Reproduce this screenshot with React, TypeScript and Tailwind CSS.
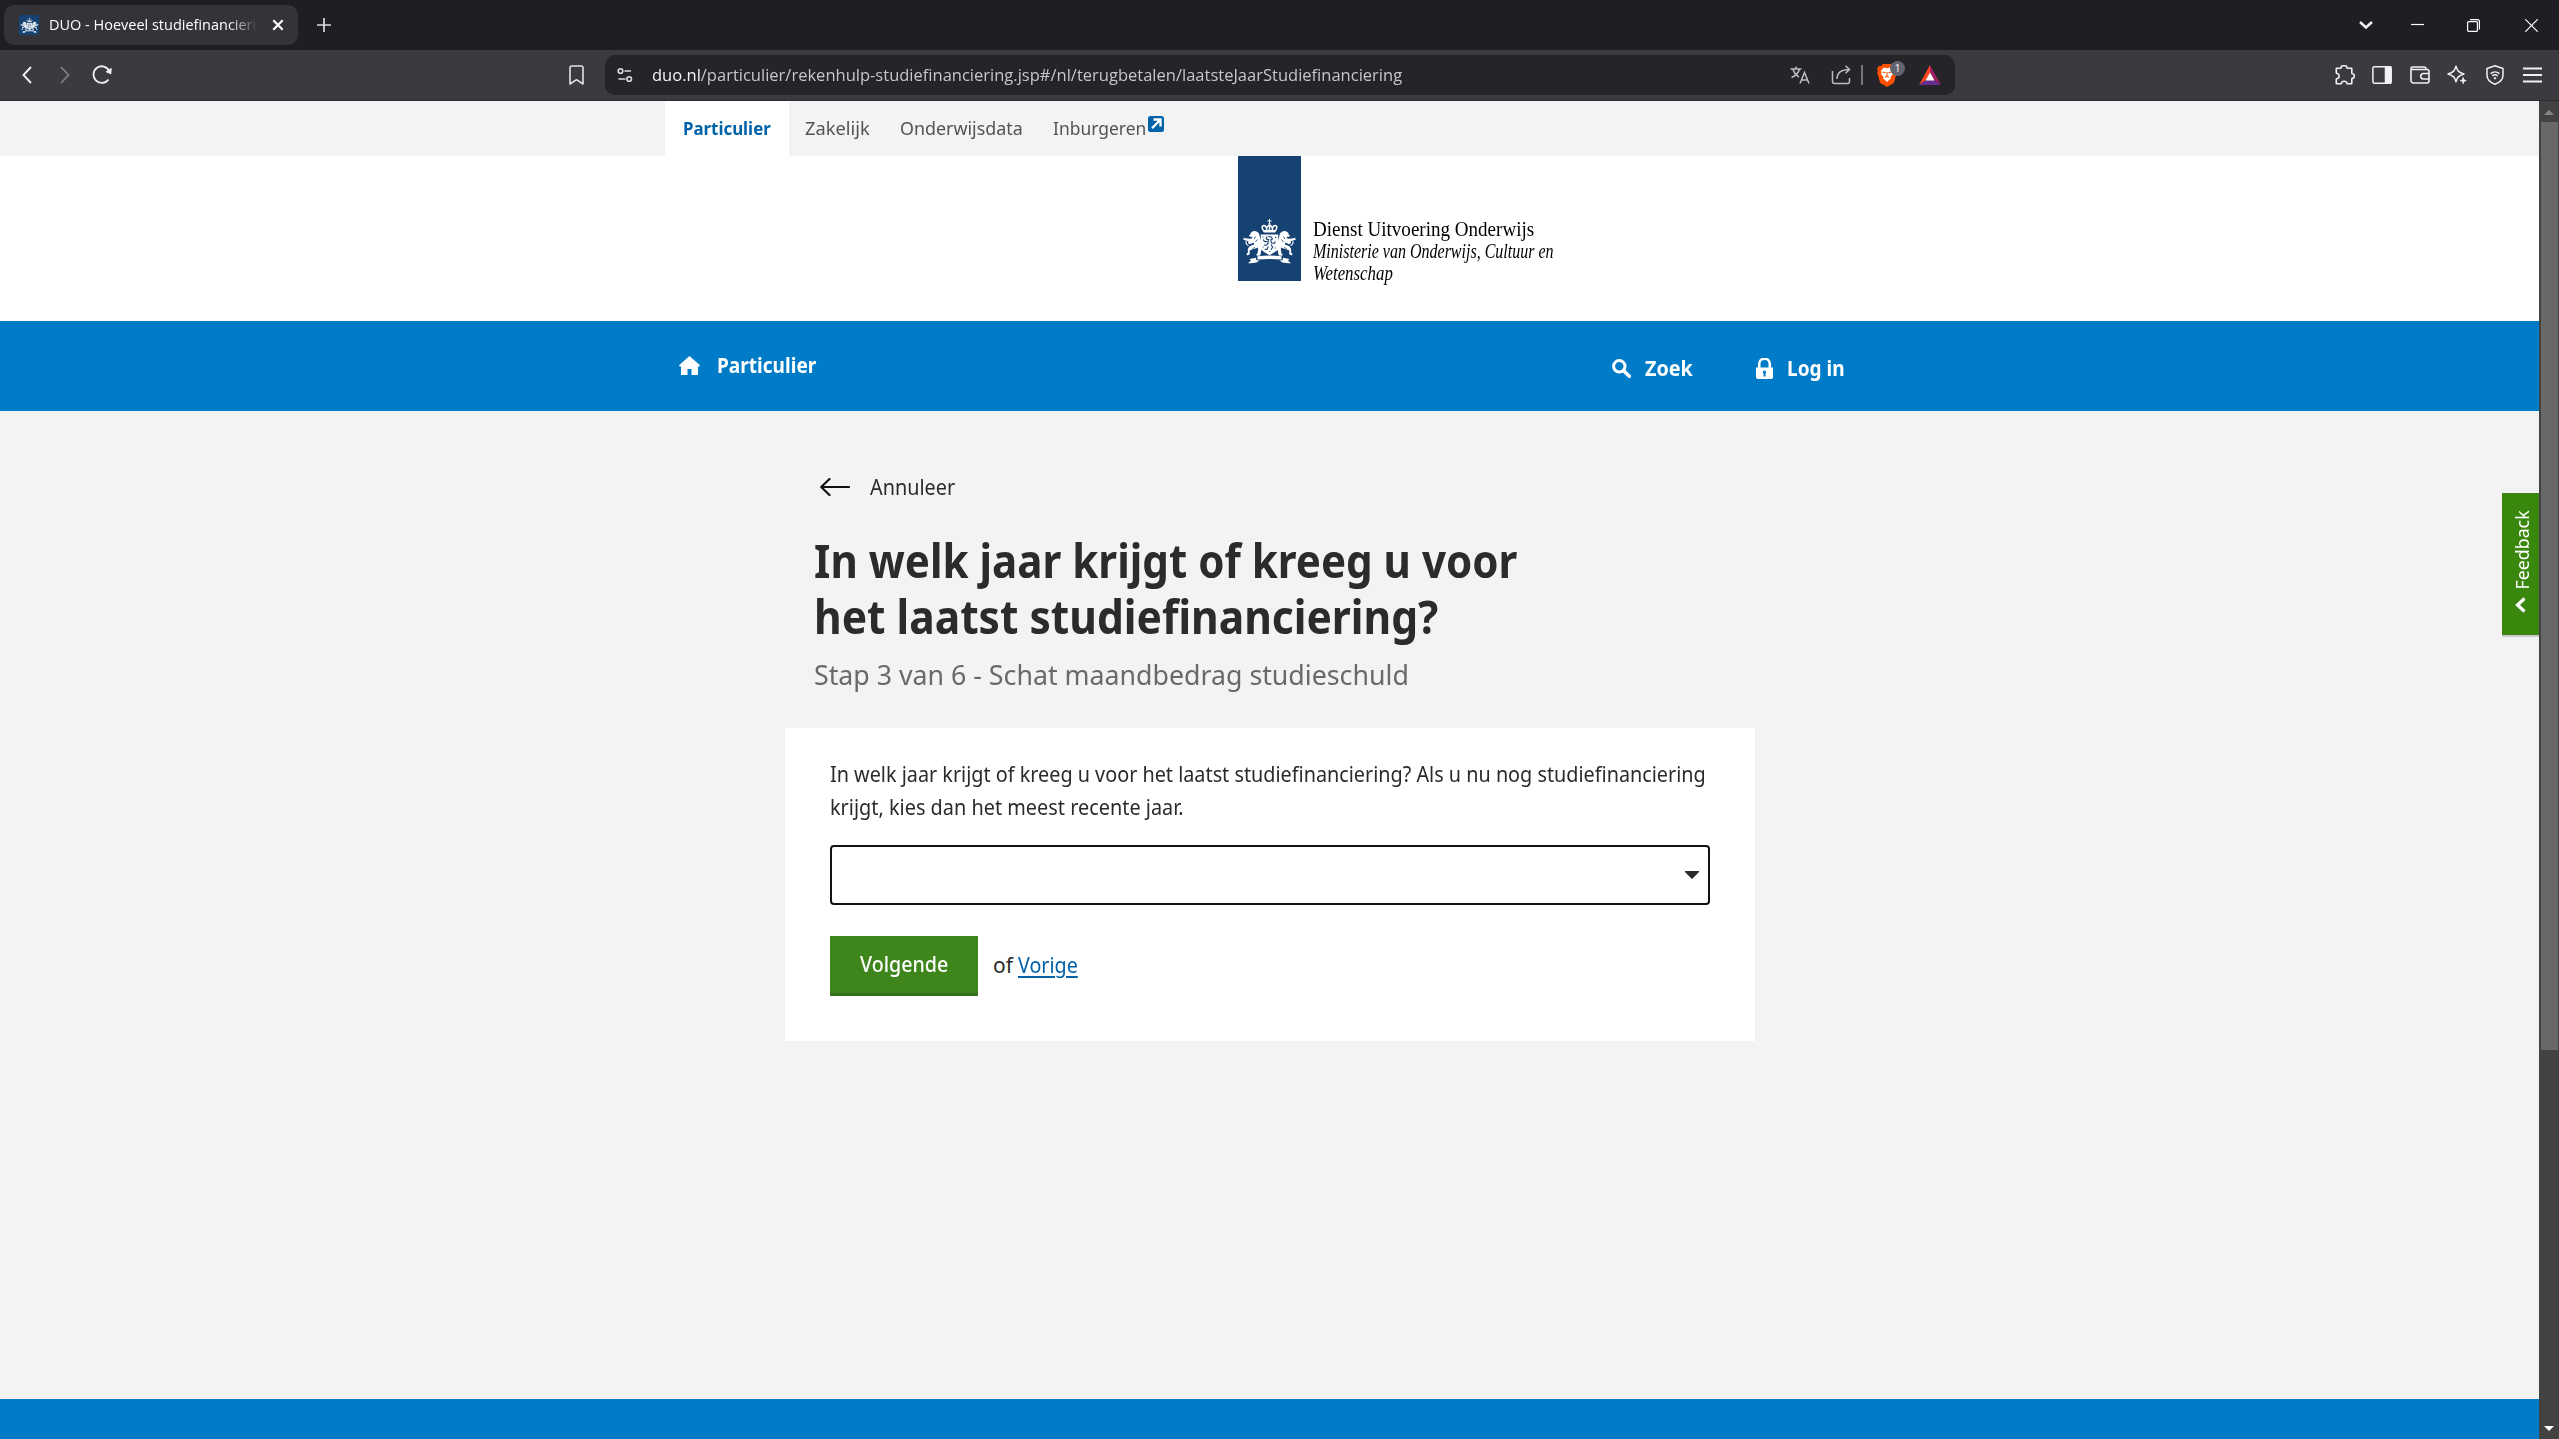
import { useLayoutEffect, useRef, useState, type ReactNode } from "react";

/* Single line of text whose glyphs are condensed to the given width. */
function Fit({ w, className = "", children }: { w: number; className?: string; children: ReactNode }) {
  const ref = useRef<HTMLSpanElement>(null);
  const [scale, setScale] = useState(1);
  useLayoutEffect(() => {
    const measure = () => {
      if (ref.current) setScale(w / ref.current.offsetWidth);
    };
    measure();
    document.fonts?.ready.then(measure);
  }, [w]);
  return (
    <span className={`block shrink-0 whitespace-nowrap ${className}`} style={{ width: w }}>
      <span ref={ref} className="inline-block origin-left" style={{ transform: `scaleX(${scale})` }}>
        {children}
      </span>
    </span>
  );
}

function Lion() {
  return (
    <g>
      <path d="M17 14.500c-1.600-2.600-5-3.400-7.400-1.600-1 .8-1.400 1.800-1.200 2.900l-1.600.6 1.200 1.300 2.600.3c-.4 1.100-1.300 1.700-2.400 1.800l-4.600-.6-2.300-.7.9 1.500-1.600.5 2.500.7 3.300 1.100-.4 1.600c.6 1 1.900 1.300 3 .8l2.800-1.300.2 2.200c-1.400.5-3.700 1-5.100 2.600-1.200 1.300-1.300 3.200-.9 5.200l-1.500 1.400.6 1.800 2.700-1.400-.2-3.600c2.300-1.800 5.600-1.600 8-3.200 1.400 1.900-.2 4.100-.1 6.200l-1.500 1.500 1.500.7 2.800-.4.9-4.600c1.800-2.400 1.800-5.500.2-8.100z" />
      <path d="M6.500 26.500c-2-.8-3.200-2.600-2.200-4.400" fill="none" stroke="currentColor" strokeWidth="1.100" />
      <path d="M13.500 17.500l-1.300 2.600M15.500 20.500l-2 2.400M10.500 29.500l2.500-1" fill="none" stroke="#154273" strokeWidth=".8" />
    </g>
  );
}

function CoatOfArms({ className }: { className: string }) {
  return (
    <svg viewBox="0 0 55 46" className={className} fill="currentColor">
      {/* crown */}
      <path d="M27 0h1v1.600h1.600v1H28v1.600h-1V2.600h-1.600v-1H27z" />
      <circle cx="27.5" cy="5" r="1.100" />
      <path
        d="M21.800 12.500l-1-2.400c-1.300-1.800-.6-3.500 1-3.600 1.500 0 2.400 1.300 2.600 2.600M33.200 12.500l1-2.400c1.300-1.800.6-3.500-1-3.600-1.500 0-2.400 1.300-2.600 2.600M24.800 11.500c-.9-2.600.8-5 2.700-5s3.600 2.400 2.700 5M27.500 6.500v5"
        fill="none"
        stroke="currentColor"
        strokeWidth="1.500"
      />
      <path d="M21.300 11h12.400l-.5 2.600H21.800z" />
      {/* shield */}
      <path d="M18.500 15.500h18v12.500c0 4-4.600 5.400-9 8.200-4.400-2.800-9-4.200-9-8.200z" />
      <path d="M25.500 17.500c-1 .6-1.400 1.600-1 2.600l2.200.5-.8 2.400-3.400-.6-1.400-1.900M26.500 17.500l2.600.4 1.400 2-1.700 1.200.8 3 2.400.3 1.500-1.700M27 23.500l-2.500 2.700-2.600-.2M29 25.500l1.600 2.500-1.400 2.700M26.300 27.500l-1.500 3.200-2-.6" stroke="#154273" strokeWidth="1.100" fill="none" />
      <path d="M20.500 18h1M33 18.500h1.200M20.600 28h1M32.600 29h1M27.300 32.500h1" stroke="#154273" strokeWidth="1.100" />
      <path d="M18 15v13c0 3 2 4.500 4 5.700M37 15v13c0 3-2 4.500-4 5.700" stroke="#154273" strokeWidth=".8" fill="none" />
      <Lion />
      <g transform="translate(55 0) scale(-1 1)">
        <Lion />
      </g>
      {/* ribbon */}
      <path d="M15.500 37.200c8-.9 16-.9 24 0v3.400c-8-.9-16-.9-24 0zM14 38.800l-6.500 1.200 1.500 1.600-3 2.600c2.500.2 5.500 0 8.500-.6l3-2.200-3.200-.2zM41 38.800l6.500 1.200-1.500 1.600 3 2.600c-2.500.2-5.500 0-8.500-.6l-3-2.200 3.200-.2z" />
    </svg>
  );
}

function TabStrip() {
  return (
    <div className="flex h-[50px] shrink-0 items-center bg-[#1f1e23] pl-1 text-white">
      <div className="flex h-10 w-[294px] items-center rounded-[10px] bg-[#343338] pr-[13px] pl-[15px]">
        <div className="flex h-5 w-5 items-center justify-center bg-[#154273]">
          <CoatOfArms className="h-[17px] w-[19px] text-[#e8edf3]" />
        </div>
        <div className="mb-[2px] ml-[10px] w-[209px] overflow-hidden [mask-image:linear-gradient(to_right,#000_86%,transparent)]">
          <Fit w={224} className="font-['Open_Sans',sans-serif] text-[15px] leading-6">
            DUO - Hoeveel studiefinanciering
          </Fit>
        </div>
        <svg viewBox="0 0 12 12" className="ml-[14px] h-3 w-3" fill="none" stroke="white" strokeWidth="2.200">
          <path d="M1.300 1.300l9.400 9.400M10.700 1.300l-9.400 9.400" />
        </svg>
      </div>
      <svg viewBox="0 0 14 14" className="ml-[19px] h-[14px] w-[14px]" stroke="#dcdbe0" strokeWidth="1.700">
        <path d="M7 0v14M0 7h14" />
      </svg>
      <div className="ml-auto flex items-center pr-[21px]">
        <svg viewBox="0 0 14 8" className="mr-[38px] h-2 w-[14px]" fill="none" stroke="#f1f1f3" strokeWidth="2.500">
          <path d="M1 1l6 5.500L13 1" />
        </svg>
        <svg viewBox="0 0 13 13" className="mr-[43px] h-[13px] w-[13px]" stroke="white" strokeWidth="1.200">
          <path d="M0 5.500h13" />
        </svg>
        <svg viewBox="0 0 13 13" className="mr-[45px] h-[13px] w-[13px]" fill="none" stroke="white" strokeWidth="1.200">
          <rect x=".6" y="2.600" width="9.800" height="9.800" rx="1" />
          <path d="M3 .6h7.400c1.200 0 2 .8 2 2V10.500" />
        </svg>
        <svg viewBox="0 0 13 13" className="h-[13px] w-[13px]" stroke="white" strokeWidth="1.200">
          <path d="M.3.3l12.400 12.400M12.700.3L.3 12.700" />
        </svg>
      </div>
    </div>
  );
}

function Slot({ children }: { children: ReactNode }) {
  return <span className="flex w-[37.5px] justify-center">{children}</span>;
}

function AddressBar() {
  return (
    <div className="flex h-10 w-[1350px] items-center rounded-[10px] bg-[#252429] pl-3 font-['Open_Sans',sans-serif]">
      <svg viewBox="0 0 16 16" className="h-4 w-4" fill="none" stroke="#dddce0" strokeWidth="1.600">
        <circle cx="3.500" cy="4" r="2.300" />
        <path d="M7.500 4H14M1.500 12h7" />
        <circle cx="12.200" cy="12" r="2.300" />
      </svg>
      <Fit w={750} className="ml-[19px] text-[17px] leading-6 text-[#c6c5ca]">
        <span className="text-[#f4f4f6]">duo.nl</span>
        /particulier/rekenhulp-studiefinanciering.jsp#/nl/terugbetalen/laatsteJaarStudiefinanciering
      </Fit>
      <div className="ml-auto flex items-center pr-[14px]">
        <svg viewBox="0 0 20 20" className="h-5 w-5" fill="none" stroke="#bdbcc1" strokeWidth="1.500">
          <path d="M.5 4h11M6 1.500V4M3 4c1 4 3.500 6.500 6 8M9.500 4C8.500 8 5 11 1.500 12.500" />
          <path d="M10 18.500l4.500-11 4.500 11M11.500 15h6" />
        </svg>
        <svg viewBox="0 0 22 20" className="ml-[21px] h-5 w-[22px]" fill="none" stroke="#bdbcc1" strokeWidth="1.500">
          <path d="M1.500 6v10.500a2 2 0 002 2h13a2 2 0 002-2V13" />
          <path d="M6 14c0-6 3.500-9.500 12.500-9.500M14.500.8l4 3.700-4 3.800" />
        </svg>
        <span className="ml-[8px] h-5 w-[2px] bg-[#76757a]" />
        <div className="relative mr-px ml-[14px]">
          <svg viewBox="0 0 20 23" className="h-[23px] w-5">
            <path d="M6 0h8l2 2 1.800-.3L20 4.500l-.8 2 .6 2-3 10.500-6.800 4-6.800-4L.2 8.500l.6-2-.8-2 2.200-2.800L4 2z" fill="#ff5000" />
            <path d="M10 4.200l3.200-.7 3 3.500-.8 1.700.7 1.300-2.600 3 .3 1.700-1.800 1.300L10 18l-2-2-1.800-1.300.3-1.700-2.600-3 .7-1.300L3.800 7l3-3.500z" fill="white" />
            <path d="M5.500 8l3 .7M14.500 8l-3 .7M10 8v4M8 13.200l2-.9 2 .9" stroke="#ff5000" strokeWidth="1.100" fill="none" />
          </svg>
          <span className="absolute -top-[3px] left-[13px] flex h-[15px] w-[15px] items-center justify-center rounded-full bg-[#63636f] text-[10px] leading-none text-white">
            1
          </span>
        </div>
        <svg viewBox="0 0 22 20" className="ml-[21px] h-5 w-[22px]">
          <path d="M11 0v8l-4 7-7 5z" fill="#ff4724" />
          <path d="M11 0v8l4 7 7 5z" fill="#9e1f63" />
          <path d="M0 20l7-5h8l7 5z" fill="#662d91" />
          <path d="M11 7.500l4.500 8h-9z" fill="white" />
        </svg>
      </div>
    </div>
  );
}

function Toolbar() {
  return (
    <div className="flex h-[51px] shrink-0 items-center border-b border-[#2b2a2f] bg-[#3b3a3f]">
      <div className="flex w-[605px] items-center pl-[22px]">
        <svg viewBox="0 0 10 18" className="h-[18px] w-[10px]" fill="none" stroke="#f1f1f3" strokeWidth="1.900">
          <path d="M9 1L1.500 9 9 17" />
        </svg>
        <svg viewBox="0 0 10 18" className="ml-[28px] h-[18px] w-[10px]" fill="none" stroke="#838287" strokeWidth="1.700">
          <path d="M1 1l7.500 8L1 17" />
        </svg>
        <svg viewBox="0 0 20 20" className="ml-[22px] h-5 w-5" fill="none" stroke="#f1f1f3" strokeWidth="1.800">
          <path d="M16.500 14.500A8.300 8.300 0 1117.300 6" />
          <path d="M19.200 3.500l-.4 5.300-4.600-2z" fill="#f1f1f3" strokeWidth="1" strokeLinejoin="round" />
        </svg>
        <svg viewBox="0 0 15 20" className="ml-[457px] h-5 w-[15px]" fill="none" stroke="#e3e2e6" strokeWidth="1.600" strokeLinejoin="round">
          <path d="M1 19V2.800A1.800 1.800 0 012.800 1h9.400A1.800 1.800 0 0114 2.800V19l-6.500-4.300z" />
        </svg>
      </div>
      <AddressBar />
      <div className="ml-auto flex items-center pr-[8px]">
        <Slot>
          <svg viewBox="0 0 20 20" className="h-5 w-5" fill="none" stroke="#f1f1f3" strokeWidth="1.600" strokeLinejoin="round">
            <path d="M1.300 3.200h4.400c.4 0 .6-.4.500-.8C6 .9 7.500.8 9 .8s3 .2 2.800 1.600c-.1.400.1.800.5.800h4.500v5c0 .4.300.6.700.6 1.200 0 1.700 1 1.700 2.200s-.5 2.400-1.700 2.400c-.4 0-.7.200-.7.600v4.800h-4.400c-.4 0-.6-.4-.6-.8 0-1.300-1.200-1.800-2.600-1.800s-2.600.5-2.600 1.800c0 .4-.2.800-.6.800H1.300v-4.600c0-.5.400-.7.900-.7 1.200-.1 1.900-1 1.900-2.200S3.400 8.700 2.200 8.500c-.5 0-.9-.2-.9-.7z" />
          </svg>
        </Slot>
        <Slot>
          <svg viewBox="0 0 20 18" className="h-[18px] w-5" fill="none" stroke="#f1f1f3" strokeWidth="1.500">
            <rect x=".9" y=".8" width="18.200" height="16.400" rx="1.500" />
            <path d="M13.500.8h4.500a1 1 0 011 1v14.400a1 1 0 01-1 1h-4.500z" fill="#f1f1f3" />
          </svg>
        </Slot>
        <Slot>
          <svg viewBox="0 0 20 18" className="h-[18px] w-5" fill="none" stroke="#f1f1f3" strokeWidth="1.600" strokeLinejoin="round">
            <path d="M1 3v11.500a2.500 2.500 0 002.500 2.500H17a2 2 0 002-2V5.500a2 2 0 00-2-2H2.500C1.500 3.500 1 3 1 2.200S1.600 1 2.500 1H14c1.200 0 2 .8 2 2v.5" />
            <path d="M19 7.500h-5.500a2.700 2.700 0 000 5.500H19" />
          </svg>
        </Slot>
        <Slot>
          <svg viewBox="0 0 20 20" className="h-5 w-5" fill="none" stroke="#f1f1f3" strokeWidth="1.500" strokeLinejoin="round">
            <path d="M9 1.200c1 4.300 2.600 6.200 8 7.800-5.400 1.600-7 3.500-8 7.800-1-4.300-2.600-6.200-8-7.800 5.400-1.600 7-3.500 8-7.800z" />
            <path d="M16.200 12.500c.3 2.200.8 2.700 3 3.100-2.200.4-2.700.9-3 3.100-.3-2.200-.8-2.700-3-3.100 2.200-.4 2.700-.9 3-3.100z" fill="#f1f1f3" strokeWidth="1" />
          </svg>
        </Slot>
        <Slot>
          <svg viewBox="0 0 18 20" className="h-5 w-[18px]" fill="none" stroke="#f1f1f3" strokeWidth="1.500" strokeLinejoin="round">
            <path d="M9 .8l8 2.700v6.700c0 4.500-3.500 7.300-8 9-4.500-1.700-8-4.500-8-9V3.500z" />
            <path d="M4.600 8.600c2.600-2.300 6.200-2.300 8.800 0M6.300 11c1.600-1.400 3.800-1.400 5.400 0" />
            <circle cx="9" cy="13.200" r=".9" fill="#f1f1f3" strokeWidth=".6" />
          </svg>
        </Slot>
        <Slot>
          <svg viewBox="0 0 19 16" className="h-4 w-[19px]" stroke="#f1f1f3" strokeWidth="1.800">
            <path d="M0 1.500h19M0 8h19M0 14.500h19" />
          </svg>
        </Slot>
      </div>
    </div>
  );
}

function SiteNav() {
  return (
    <nav className="flex h-[55px] shrink-0 items-center bg-[#f3f3f3] pl-[665px] font-['Noto_Sans',sans-serif] text-[18px] leading-6 text-[#535353]">
      <div className="flex h-full w-[124px] items-center bg-white pb-[2px] pl-[18px] font-bold text-[#0062a8]">
        <Fit w={88}>Particulier</Fit>
      </div>
      <Fit w={65} className="mb-[2px] ml-[16px]">Zakelijk</Fit>
      <Fit w={123} className="mb-[2px] ml-[30px]">Onderwijsdata</Fit>
      <Fit w={93} className="mb-[2px] ml-[30px]">Inburgeren</Fit>
      <svg viewBox="0 0 16 16" className="mb-[9px] ml-[2px] h-4 w-4">
        <rect width="16" height="16" rx="2.500" fill="#0062a8" />
        <path d="M5.500 3.500h7v7M12 4L4 12.300" stroke="white" strokeWidth="2.300" fill="none" />
      </svg>
    </nav>
  );
}

function Masthead() {
  return (
    <header className="flex h-[165px] shrink-0 bg-white pl-[1238px]">
      <div className="flex h-[125px] w-[63px] justify-center bg-[#154273] pt-[63px]">
        <CoatOfArms className="h-[46px] w-[55px] text-white" />
      </div>
      <div className="ml-3 pt-[62px] font-['Liberation_Serif',serif] text-[20px] leading-[22px] text-black">
        <Fit w={221}>Dienst Uitvoering Onderwijs</Fit>
        <Fit w={241} className="italic">Ministerie van Onderwijs, Cultuur en</Fit>
        <Fit w={80} className="italic">Wetenschap</Fit>
      </div>
    </header>
  );
}

function MainBar() {
  return (
    <div className="flex h-[90px] shrink-0 bg-[#007bc7] pl-[679px] font-['Noto_Sans',sans-serif] text-[21px] leading-6 font-bold text-white">
      <div className="flex h-[88px] items-center">
        <svg viewBox="0 0 21 19" className="h-[19px] w-[21px]" fill="white">
          <path d="M10.500 0L21 9.200l-.8 1.200H19V19h-6.500v-6h-4v6H2v-8.600H.8L0 9.200z" />
        </svg>
        <Fit w={99} className="ml-[17px]">Particulier</Fit>
      </div>
      <div className="ml-[796px] flex h-[94px] items-center">
        <svg viewBox="0 0 19 19" className="h-[19px] w-[19px]" fill="none" stroke="white">
          <circle cx="7.300" cy="7.300" r="5.700" strokeWidth="3" />
          <path d="M11.500 11.500l5.800 5.800" strokeWidth="3.600" strokeLinecap="round" />
        </svg>
        <Fit w={48} className="ml-[14px]">Zoek</Fit>
        <svg viewBox="0 0 17 21" className="ml-[63px] h-[21px] w-[17px]">
          <path d="M3.200 10V6a5.300 5.300 0 0110.600 0v4" fill="none" stroke="white" strokeWidth="2.600" />
          <path d="M0 9.500h17V19c0 1.300-.7 2-2 2H2c-1.300 0-2-.7-2-2z" fill="white" />
          <path d="M8.500 12.500a1.700 1.700 0 011 3V18.500h-2v-3a1.700 1.700 0 011-3z" fill="#007bc7" />
        </svg>
        <Fit w={58} className="ml-[14px]">Log in</Fit>
      </div>
    </div>
  );
}

function QuestionCard() {
  return (
    <section className="mt-[37px] h-[313px] w-[970px] bg-white px-[45px] pt-[30px] text-[21px] leading-[33px] text-[#2b2b2b]">
      <Fit w={876}>
        In welk jaar krijgt of kreeg u voor het laatst studiefinanciering? Als u nu nog studiefinanciering
      </Fit>
      <Fit w={354}>krijgt, kies dan het meest recente jaar.</Fit>
      <div className="mt-[21px] flex h-[60px] w-[880px] items-center justify-end rounded-[4px] border-2 border-[#111111] bg-white pr-[9px]">
        <svg viewBox="0 0 14 8" className="mb-[1px] h-2 w-[14px]" fill="#2b2b2b">
          <path d="M0 0h14v1L7.600 7.600a.8.8 0 01-1.200 0L0 1z" />
        </svg>
      </div>
      <div className="mt-[31px] flex items-center">
        <button className="flex h-[60px] w-[148px] items-center justify-center border-b-[3px] border-[#33701a] bg-[#3e861c] text-white">
          <Fit w={88} className="text-left font-medium">Volgende</Fit>
        </button>
        <div className="mb-[2px] ml-[15px] flex">
          <Fit w={20}>of</Fit>
          <Fit w={60} className="ml-[5px] text-[#0062a8]">
            <span className="underline decoration-2 underline-offset-[3px] [text-decoration-skip-ink:auto]">Vorige</span>
          </Fit>
        </div>
      </div>
    </section>
  );
}

function Question() {
  return (
    <main className="flex-1 bg-[#f3f3f3] pt-[63px] pl-[785px] font-['Noto_Sans',sans-serif]">
      <div className="flex h-[26px] items-center pl-[35px] text-[21px] leading-[26px] text-[#2b2b2b]">
        <svg viewBox="0 0 30 18" className="h-[18px] w-[30px]" fill="none" stroke="#111111" strokeWidth="2.200" strokeLinecap="round" strokeLinejoin="round">
          <path d="M9.500 1L1.200 9l8.300 8M1.200 9H29" />
        </svg>
        <Fit w={85} className="ml-[20px]">Annuleer</Fit>
      </div>
      <h1 className="mt-[32px] pl-[29px] text-[46px] leading-[56px] font-bold text-[#2b2b2b]">
        <Fit w={703}>In welk jaar krijgt of kreeg u voor</Fit>
        <Fit w={624}>het laatst studiefinanciering?</Fit>
      </h1>
      <p className="mt-[13px] pl-[29px] text-[28px] leading-[34px] text-[#696969]">
        <Fit w={595}>Stap 3 van 6 - Schat maandbedrag studieschuld</Fit>
      </p>
      <QuestionCard />
    </main>
  );
}

function FeedbackTab() {
  return (
    <div className="absolute top-[392px] right-0 flex h-[142px] w-[37px] flex-col items-center bg-[#39870c] pt-[15px] text-white shadow-[0_2px_0_#cccccc]">
      <div className="mt-[2px] ml-[2px] flex h-[80px] w-[24px] items-center justify-center">
        <Fit w={79} className="-rotate-90 font-['Noto_Sans',sans-serif] text-[18px] leading-6">
          Feedback
        </Fit>
      </div>
      <svg viewBox="0 0 11 16" className="mt-[7px] h-4 w-[11px]" fill="none" stroke="white" strokeWidth="3.200">
        <path d="M9.500 1.500L2.500 8l7 6.500" />
      </svg>
    </div>
  );
}

function ScrollBar() {
  return (
    <div className="flex w-5 shrink-0 flex-col items-center bg-[#424242]">
      <svg viewBox="0 0 10 5" className="mt-[9px] mb-[7px] h-[5px] w-[10px] shrink-0" fill="#868686">
        <path d="M5 0l5 5H0z" />
      </svg>
      <div className="h-[928px] w-[17px] shrink-0 bg-[#686868]" />
      <svg viewBox="0 0 10 5" className="mt-auto mb-[8px] h-[5px] w-[10px] shrink-0" fill="white">
        <path d="M0 0h10L5 5z" />
      </svg>
    </div>
  );
}

export default function App() {
  return (
    <div className="flex h-[1439px] w-[2559px] flex-col overflow-hidden">
      <TabStrip />
      <Toolbar />
      <div className="flex flex-1">
        <div className="relative flex flex-1 flex-col">
          <SiteNav />
          <Masthead />
          <MainBar />
          <Question />
          <footer className="h-10 shrink-0 bg-[#007bc7]" />
          <FeedbackTab />
        </div>
        <ScrollBar />
      </div>
    </div>
  );
}
